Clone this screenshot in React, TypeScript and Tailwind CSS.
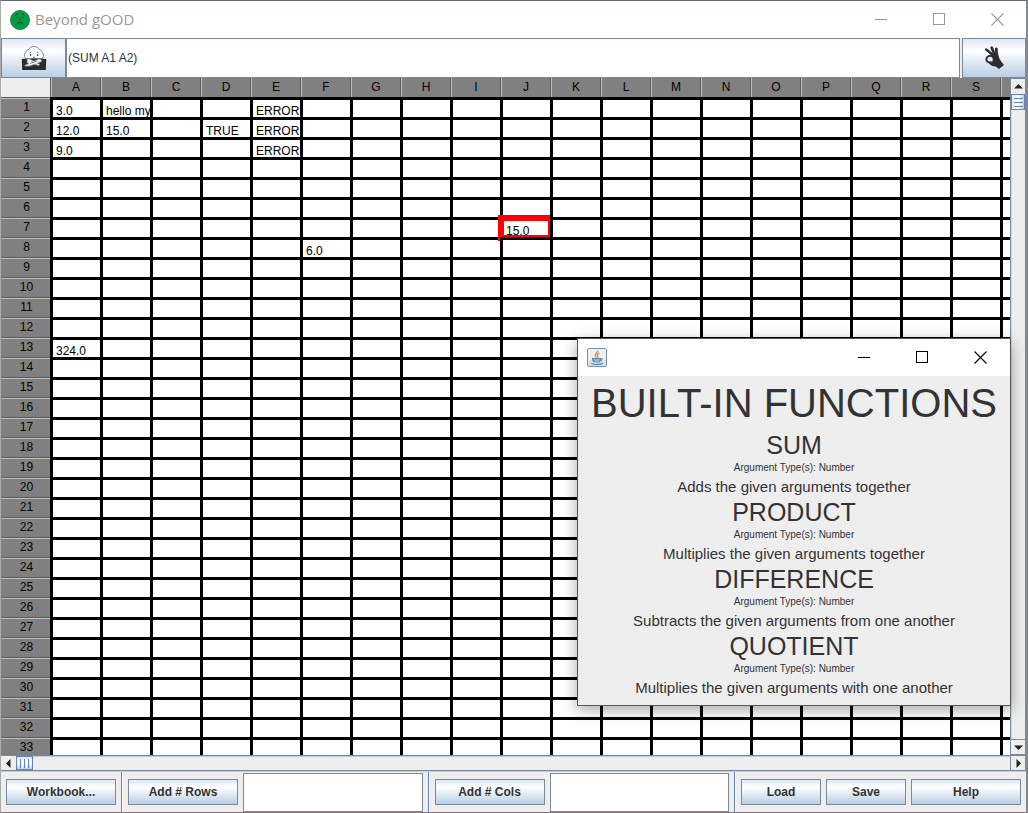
import type { ReactNode } from "react";

const COLUMNS = [..."ABCDEFGHIJKLMNOPQRS".split(""), ""];
const ROWS = Array.from({ length: 33 }, (_, i) => i + 1);

const CELLS: Record<string, string> = {
  A1: "3.0",
  B1: "hello my",
  E1: "ERROR",
  A2: "12.0",
  B2: "15.0",
  D2: "TRUE",
  E2: "ERROR",
  A3: "9.0",
  E3: "ERROR",
  J7: "15.0",
  F8: "6.0",
  A13: "324.0",
};

const SELECTED = "J7";

const FUNCTIONS = [
  { name: "SUM", args: "Number", text: "Adds the given arguments together" },
  { name: "PRODUCT", args: "Number", text: "Multiplies the given arguments together" },
  { name: "DIFFERENCE", args: "Number", text: "Subtracts the given arguments from one another" },
  { name: "QUOTIENT", args: "Number", text: "Multiplies the given arguments with one another" },
];

const METAL =
  "border border-[#7a8a99] bg-linear-to-b from-[#dde8f3] via-white via-30% to-[#b8cfe5]";

function SmileyIcon() {
  return (
    <svg width="20" height="20" viewBox="0 0 20 20" aria-hidden="true">
      <circle cx="10" cy="10" r="9.6" fill="#079b48" stroke="#087a3b" strokeWidth=".8" />
      <g fill="none" stroke="#10432a" strokeWidth="1">
        <path d="M5.500 5l2.500-1.500M12 3.500l2.500 1.500M6 7.500h1.500M12.500 7.500H14M10 8v2.500M6.500 14.500c1-2.600 6-2.600 7 0" />
      </g>
    </svg>
  );
}

function PersonIcon() {
  return (
    <svg width="26" height="26" viewBox="0 0 26 26" aria-hidden="true">
      <path
        d="M6.500 14C3 13 2.600 9 5 7.500c0-1.600 1-2.600 2.500-2.800C8.500 2.400 10.500 1.500 13 1.500s4.500.9 5.500 3.200c1.500.2 2.500 1.200 2.500 2.800 2.400 1.500 2 5.500-1.500 6.500z"
        fill="#fafbfc"
        stroke="#6a6e74"
        strokeWidth=".8"
      />
      <path d="M8.300 8l2-.8M15.700 7.200l2 .8" stroke="#777" strokeWidth=".8" />
      <path d="M9.500 9.200v1.600M16.500 9.200v1.600" stroke="#222" strokeWidth="1.300" />
      <path d="M12 12.300h2" stroke="#666" strokeWidth=".8" />
      <path d="M.8 14l5-.5h14.500l5 .5-.5 11H1.200z" fill="#2b2b2e" />
      <path
        d="M6 14.500c1-1 2.500-.8 4 .1l3 1.400 3.500-1.600c1.500-.8 3-.6 4 .6.500.8 0 1.700-1 2.100l-3 1.100 2.500 1.200-1.500 1.100-4-1.100-5.500 1.800-4.500-.2 1-1.300 3-.9-1.500-1.500z"
        fill="#e9edf1"
        stroke="#777"
        strokeWidth=".6"
      />
      <path d="M9 18.600l7-2.800M10 16.200l3 1.300" fill="none" stroke="#666" strokeWidth=".6" />
    </svg>
  );
}

function OkHandIcon() {
  return (
    <svg width="22" height="24" viewBox="0 0 22 24" aria-hidden="true">
      <g fill="none" stroke="#2d2d2d" strokeLinecap="round">
        <path d="M3.200 3.500L10 9" strokeWidth="2.400" />
        <path d="M8.700 1.800l3.500 8" strokeWidth="2.800" />
        <path d="M13.300 3l.8 9" strokeWidth="2.800" />
        <path d="M9 10.300c-2-1.200-5.200-.2-5.600 2.600-.3 2.600 1.700 4 4.600 3.300" strokeWidth="2" />
      </g>
      <path
        d="M8.500 8l6.300-.5c.7 2.800 1.700 5.700 3.200 7.700l3 3.800-5 4-3.300-2.500c-3-.2-5.500-1.500-7-3.600 2.800.5 4.300-1.200 4-3.900-.2-1.700-1-2.500-2.200-3z"
        fill="#2d2d2d"
      />
    </svg>
  );
}

function JavaIcon() {
  return (
    <svg width="20" height="19" viewBox="0 0 20 19" aria-hidden="true">
      <rect x=".5" y=".5" width="19" height="18" rx="1.500" fill="#eef1f4" stroke="#7b93a9" />
      <path d="M1 12h18v6H1z" fill="#dde2e8" />
      <path
        d="M10.800 2.500c.8 2-3.800 3-2.500 5.300l1.200 1.700M12.500 5c-2 .9-3 1.900-1.900 3 .4.600.2 1-.3 1.500"
        fill="none"
        stroke="#e8842c"
        strokeWidth="1.300"
      />
      <path
        d="M5.500 10.500h8c0 2-.8 3.500-2 3.500H8c-1.500 0-2.300-1.500-2.500-3.500zM13.500 10.500c2.500-.4 2 2.200-.8 2.200M4 15.500c3 1.300 9 1.300 12-.3"
        fill="none"
        stroke="#5382a1"
        strokeWidth="1.100"
      />
      <path d="M6 12h7" stroke="#5382a1" />
    </svg>
  );
}

function WindowControls({ dialog = false }: { dialog?: boolean }) {
  const box = "flex h-full w-[58px] items-center justify-center";
  return (
    <div className={dialog ? "flex h-full text-black" : "flex h-full text-[#999]"}>
      <button type="button" aria-label="Minimize" className={box}>
        <svg width="13" height="13" shapeRendering="crispEdges">
          <path d="M0 6.500h12" stroke="currentColor" />
        </svg>
      </button>
      <button type="button" aria-label="Maximize" className={box}>
        <svg width="13" height="13" shapeRendering="crispEdges">
          <path d="M.5.5h11v11H.5z" fill="none" stroke="currentColor" />
        </svg>
      </button>
      <button type="button" aria-label="Close" className={box}>
        <svg width="13" height="13">
          <path d="M.5.500l12 12M12.500.5l-12 12" stroke="currentColor" strokeWidth="1.100" />
        </svg>
      </button>
    </div>
  );
}

function MetalButton({ children, className }: { children: ReactNode; className: string }) {
  return (
    <button
      type="button"
      className={`${METAL} h-[26px] shrink-0 text-xs font-bold text-[#333] ${className}`}
    >
      {children}
    </button>
  );
}

function Divider() {
  return (
    <div className="mx-[5px] w-[2px] shrink-0 self-stretch border-r border-l border-r-white border-l-[#6382bf]" />
  );
}

function Arrow({ d, label, className }: { d: string; label: string; className: string }) {
  return (
    <button
      type="button"
      aria-label={label}
      className={`flex shrink-0 items-center justify-center bg-[#eee] ${className}`}
    >
      <svg width="9" height="9" viewBox="0 0 9 9" aria-hidden="true">
        <path d={d} fill="#222" />
      </svg>
    </button>
  );
}

function VerticalScrollbar() {
  return (
    <div className="flex w-4 shrink-0 flex-col border-x border-l-[#7a8a99] border-r-[#7a8a99] bg-[#eee]">
      <Arrow d="M0 6.500h9L4.500 2z" label="Scroll up" className="h-4 border-t border-[#7a8a99]" />
      <div className="flex h-4 shrink-0 flex-col items-center justify-center gap-px border border-[#6382bf] bg-linear-to-r from-[#dde8f3] via-white to-[#b8cfe5]">
        <span className="h-px w-[9px] bg-[#6382bf]" />
        <span className="h-px w-[9px] bg-white" />
        <span className="h-px w-[9px] bg-[#6382bf]" />
        <span className="h-px w-[9px] bg-white" />
        <span className="h-px w-[9px] bg-[#6382bf]" />
      </div>
      <div className="flex-1 border-l border-[#d5d9dd]" />
      <Arrow d="M0 2.500h9L4.500 7z" label="Scroll down" className="h-4 border-y border-[#7a8a99]" />
    </div>
  );
}

function HorizontalScrollbar() {
  return (
    <div className="flex h-4 shrink-0 border-y border-[#7a8a99] bg-[#eee]">
      <Arrow d="M6.500 0v9L2 4.500z" label="Scroll left" className="w-[15px]" />
      <div className="flex w-[17px] shrink-0 items-center justify-center gap-px border border-[#6382bf] bg-linear-to-b from-[#dde8f3] via-white to-[#b8cfe5]">
        <span className="h-[9px] w-px bg-[#6382bf]" />
        <span className="h-[9px] w-px bg-white" />
        <span className="h-[9px] w-px bg-[#6382bf]" />
        <span className="h-[9px] w-px bg-white" />
        <span className="h-[9px] w-px bg-[#6382bf]" />
      </div>
      <div className="flex-1 border-t border-[#b8cfe5]" />
      <Arrow d="M2.500 0v9L7 4.500z" label="Scroll right" className="w-4 border-x border-[#7a8a99]" />
    </div>
  );
}

function Sheet() {
  return (
    <table className="w-[1049px] table-fixed border-separate border-spacing-0 text-xs leading-[14px] text-black">
      <colgroup>
        <col className="w-[49px]" />
        {COLUMNS.map((c) => (
          <col key={c} className="w-[50px]" />
        ))}
      </colgroup>
      <thead>
        <tr className="h-[19px]">
          <td className="bg-[#eee] p-0" />
          {COLUMNS.map((c) => (
            <th
              key={c}
              scope="col"
              className="h-[19px] border-l border-[#5a5a5a] bg-[#808080] pt-0 pr-0 pb-[2px] pl-px text-center font-normal shadow-[inset_1px_0_0_#c0c0c0]"
            >
              {c}
            </th>
          ))}
        </tr>
      </thead>
      <tbody>
        {ROWS.map((r) => (
          <tr key={r} className="h-[20px]">
            <th
              scope="row"
              className="h-[20px] border-t border-[#5a5a5a] bg-[#808080] pt-0 pr-0 pb-[2px] pl-[2px] text-center font-normal shadow-[inset_0_1px_0_#c0c0c0]"
            >
              {r}
            </th>
            {COLUMNS.map((c) => {
              const id = `${c}${r}`;
              return (
                <td key={id} className="relative h-[20px] border-t-3 border-l-3 border-black bg-white p-0">
                  <div className="mt-[3px] h-[14px] overflow-hidden pl-[3px] leading-[16px] whitespace-nowrap">
                    {CELLS[id]}
                  </div>
                  {id === SELECTED && (
                    <div className="absolute -top-[5px] -left-[5px] z-10 h-[22px] w-[52px] border-t-6 border-r-2 border-b-2 border-l-6 border-[#f00] after:absolute after:top-[16px] after:-left-[6px] after:h-[4px] after:w-[2px] after:bg-[#f00]" />
                  )}
                </td>
              );
            })}
          </tr>
        ))}
      </tbody>
    </table>
  );
}

function HelpDialog() {
  return (
    <section
      role="dialog"
      aria-label="Built-in functions"
      className="absolute top-[337px] left-[576px] z-20 h-[368px] w-[434px] border border-[#555] bg-[#eee] text-center text-[#333] shadow-[0_4px_14px_rgba(0,0,0,0.35)]"
    >
      <header className="flex h-[37px] items-center justify-between bg-white pr-px pl-[9px]">
        <JavaIcon />
        <WindowControls dialog />
      </header>
      <h1 className="mt-1 h-[51px] text-[40px] leading-[46px] whitespace-nowrap">BUILT-IN FUNCTIONS</h1>
      {FUNCTIONS.map((f) => (
        <div key={f.name} className="pb-[2px]">
          <h2 className="text-[25px] leading-[28px]">{f.name}</h2>
          <p className="text-[10px] leading-[18px]">Argument Type(s): {f.args}</p>
          <p className="text-[15px] leading-[19px]">{f.text}</p>
        </div>
      ))}
    </section>
  );
}

export default function App() {
  return (
    <main className="relative flex h-screen flex-col overflow-hidden border-t border-r-2 border-b border-l border-t-[#666a70] border-r-[#85888f] border-b-[#8a7078] border-l-[#aaa] bg-[#eee] font-['Liberation_Sans',Arial,sans-serif] text-[#333]">
      <header className="flex h-[37px] shrink-0 items-center bg-white pl-[9px]">
        <SmileyIcon />
        <span className="ml-[5px] flex-1 font-['Open_Sans',sans-serif] text-[15px] text-[#999]">Beyond gOOD</span>
        <WindowControls />
      </header>

      <div className="flex h-[40px] shrink-0">
        <button type="button" aria-label="Reject edit" className={`${METAL} flex w-[65px] items-center justify-center`}>
          <PersonIcon />
        </button>
        <input
          aria-label="Formula"
          defaultValue="(SUM A1 A2)"
          className="mr-[2px] min-w-0 flex-1 border border-[#7a8a99] bg-white px-px text-xs outline-none"
        />
        <button type="button" aria-label="Confirm edit" className={`${METAL} flex w-[64px] items-center justify-center`}>
          <OkHandIcon />
        </button>
      </div>

      <div className="flex min-h-0 flex-1">
        <div className="min-w-0 flex-1 overflow-hidden">
          <Sheet />
        </div>
        <VerticalScrollbar />
      </div>
      <HorizontalScrollbar />

      <footer className="flex h-[41px] shrink-0 items-center border-t border-[#b8cfe5] px-[5px]">
        <MetalButton className="w-[110px]">Workbook...</MetalButton>
        <Divider />
        <MetalButton className="w-[110px]">Add # Rows</MetalButton>
        <input
          aria-label="Number of rows"
          className="ml-[5px] h-[39px] min-w-0 flex-1 border border-[#7a8a99] bg-white px-px text-xs outline-none"
        />
        <Divider />
        <MetalButton className="w-[110px]">Add # Cols</MetalButton>
        <input
          aria-label="Number of columns"
          className="ml-[5px] h-[39px] min-w-0 flex-1 border border-[#7a8a99] bg-white px-px text-xs outline-none"
        />
        <Divider />
        <div className="flex gap-[5px]">
          <MetalButton className="w-[80px]">Load</MetalButton>
          <MetalButton className="w-[80px]">Save</MetalButton>
          <MetalButton className="w-[110px]">Help</MetalButton>
        </div>
      </footer>

      <HelpDialog />
    </main>
  );
}
